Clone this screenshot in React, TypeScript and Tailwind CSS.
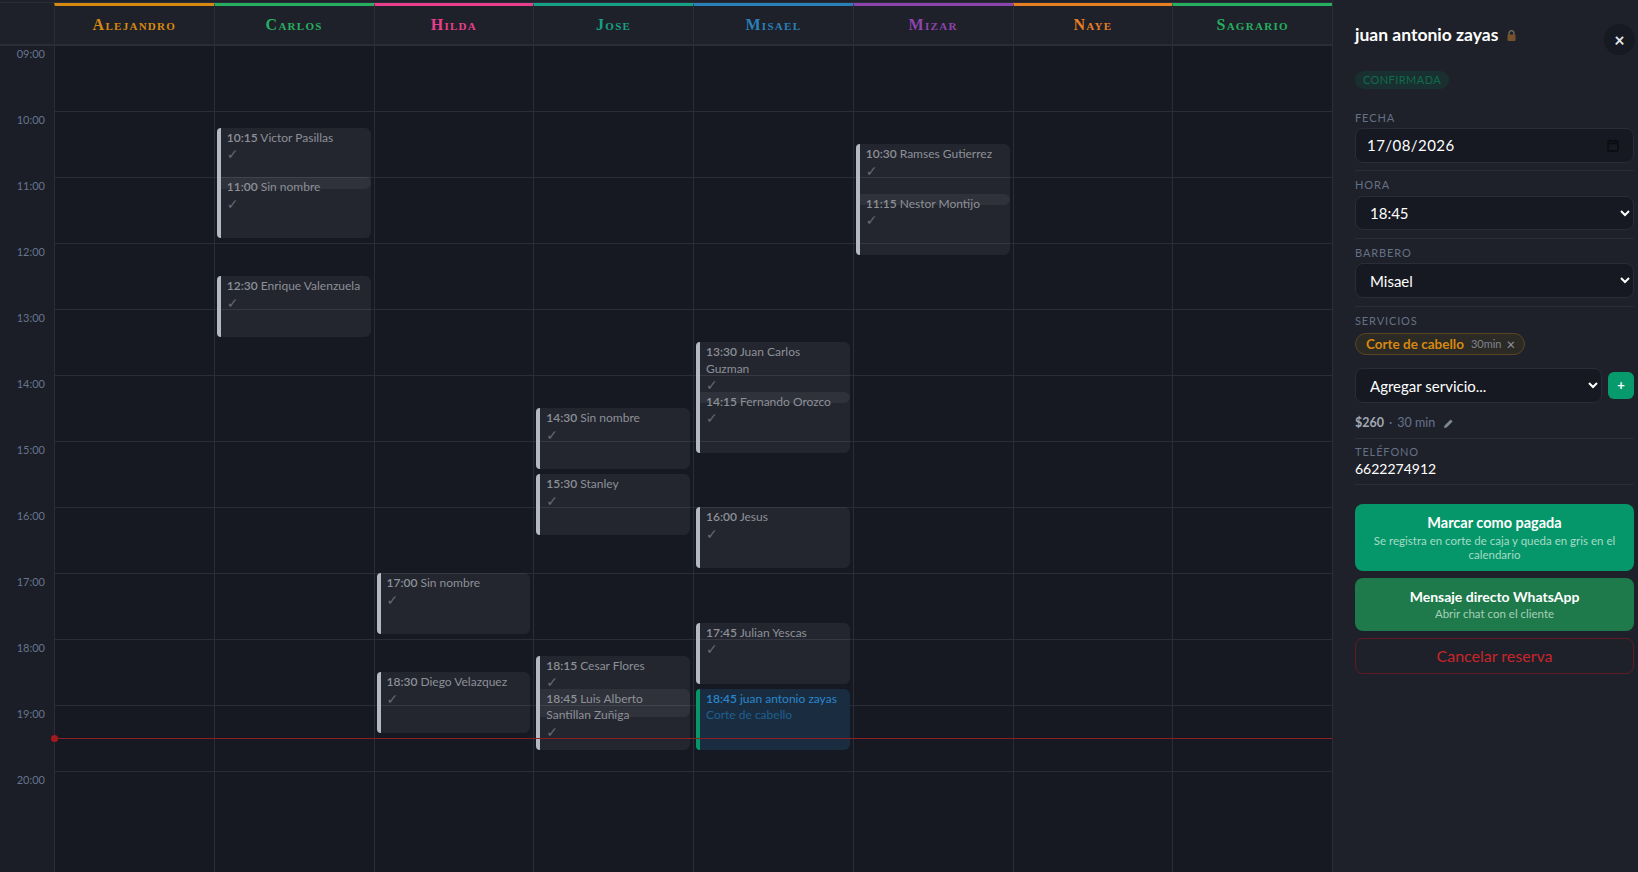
import React from 'react';

const hours = ['09:00', '10:00', '11:00', '12:00', '13:00', '14:00', '15:00', '16:00', '17:00', '18:00', '19:00', '20:00'];

const barbers = [
    { name: 'Alejandro', accent: 'border-t-[#d68910] text-[#d68910]' },
    { name: 'Carlos', accent: 'border-t-[#27ae60] text-[#27ae60]' },
    { name: 'Hilda', accent: 'border-t-[#e83e8c] text-[#e83e8c]' },
    { name: 'Jose', accent: 'border-t-[#16a085] text-[#16a085]' },
    { name: 'Misael', accent: 'border-t-[#2980b9] text-[#2980b9]' },
    { name: 'Mizar', accent: 'border-t-[#8e44ad] text-[#8e44ad]' },
    { name: 'Naye', accent: 'border-t-[#e67e22] text-[#e67e22]' },
    { name: 'Sagrario', accent: 'border-t-[#27ae60] text-[#27ae60]' },
];

type Booking = { time: string; client: string; service?: string; active?: boolean };

const bookings: Record<string, Booking[]> = {
    Carlos: [
        { time: '10:15', client: 'Victor Pasillas' },
        { time: '11:00', client: 'Sin nombre' },
        { time: '12:30', client: 'Enrique Valenzuela' },
    ],
    Hilda: [
        { time: '17:00', client: 'Sin nombre' },
        { time: '18:30', client: 'Diego Velazquez' },
    ],
    Jose: [
        { time: '14:30', client: 'Sin nombre' },
        { time: '15:30', client: 'Stanley' },
        { time: '18:15', client: 'Cesar Flores' },
        { time: '18:45', client: 'Luis Alberto Santillan Zuñiga' },
    ],
    Misael: [
        { time: '13:30', client: 'Juan Carlos Guzman' },
        { time: '14:15', client: 'Fernando Orozco' },
        { time: '16:00', client: 'Jesus' },
        { time: '17:45', client: 'Julian Yescas' },
        { time: '18:45', client: 'juan antonio zayas', service: 'Corte de cabello', active: true },
    ],
    Mizar: [
        { time: '10:30', client: 'Ramses Gutierrez' },
        { time: '11:15', client: 'Nestor Montijo' },
    ],
};

const topFor = (time: string) => {
    const [h, m] = time.split(':').map(Number);
    return (h - 9 + m / 60) * 66 - 1;
};

const BookingCard = ({ booking }: { booking: Booking }) => (
    <div
        className={`absolute left-[2px] right-[3px] h-[61px] rounded-l-[4px] rounded-r-md border-l-4 pl-[6px] pr-[8px] pt-[2px] text-[12px] leading-[16.5px] ${
            booking.active ? 'border-l-[#059669] bg-[#1a2d40] text-[#2a85cc]' : 'border-l-[#b4bac4] bg-white/[0.06] text-[#8d9097]'
        }`}
        style={{ top: topFor(booking.time) }}
    >
        <div>
            <span className="font-semibold">{booking.time}</span> {booking.client}
        </div>
        {booking.active ? (
            <div className="text-[#1f5f90]">{booking.service}</div>
        ) : (
            <div className="font-['DejaVu_Sans'] text-[14px] text-[#666a72]">✓</div>
        )}
    </div>
);

const Label = ({ children }: { children: React.ReactNode }) => (
    <div className="text-[11px] leading-[14px] tracking-[0.08em] text-[#667085]">{children}</div>
);

const Divider = () => <div className="h-px bg-[#2a2d38]" />;

const fieldClass = 'w-full rounded-lg border border-[#2a2d38] bg-[#161922] px-[10px] text-[15px] text-white outline-none';

export default function App() {
    return (
        <div className="flex h-screen overflow-hidden bg-[#1e2129] font-['Lato',sans-serif]">
            <div className="flex w-[1332px] flex-col pt-[2px]">
                <div className="grid h-[44px] grid-cols-[54px_repeat(8,1fr)] border-t border-t-[#2a2d38] border-b-2 border-b-[#2a2d38]">
                    <div />
                    {barbers.map((b) => (
                        <div
                            key={b.name}
                            className={`flex items-center justify-center border-l border-t-[3px] border-l-[#2a2d38] bg-[#1e2129] pb-px font-['Liberation_Serif',serif] text-[16px] font-bold tracking-[0.08em] [font-variant:small-caps] ${b.accent}`}
                        >
                            {b.name}
                        </div>
                    ))}
                </div>
                <div className="relative grid flex-1 grid-cols-[54px_repeat(8,1fr)] bg-[#161922]">
                    <div className="flex flex-col bg-[#1b1e26]">
                        {hours.map((h, i) => (
                            <div
                                key={h}
                                className={`pr-[9px] text-right text-[11px] leading-[14px] text-[#66748f] ${
                                    i === 0 ? 'h-[65px] pt-px' : i === 11 ? 'flex-1 pt-[2px]' : 'h-[66px] pt-[2px]'
                                }`}
                            >
                                {h}
                            </div>
                        ))}
                    </div>
                    {barbers.map((b) => (
                        <div key={b.name} className="relative flex flex-col border-l border-[#2a2d38]">
                            {hours.map((h, i) => (
                                <div
                                    key={h}
                                    className={i === 0 ? 'h-[65px]' : i === 11 ? 'flex-1 border-t border-[#2a2d38]' : 'h-[66px] border-t border-[#2a2d38]'}
                                />
                            ))}
                            {(bookings[b.name] || []).map((booking) => (
                                <BookingCard key={booking.time} booking={booking} />
                            ))}
                        </div>
                    ))}
                    <div className="absolute left-[54px] right-0 top-[692px] h-px bg-[#8b1f24]">
                        <div className="absolute -left-[3px] -top-[3px] size-[7px] rounded-full bg-[#a3191f]" />
                    </div>
                </div>
            </div>

            <aside className="flex w-[306px] flex-col border-l border-[#2a2d38] pl-[22px] pr-1">
                <div className="relative flex h-[71px] items-start">
                    <div className="mt-[24px] flex items-center gap-2 text-[17.5px] font-bold leading-[22px] text-white">
                        juan antonio zayas
                        <svg width="9" height="11" viewBox="0 0 9 11" className="ml-[1px]">
                            <path d="M2 5V3.2a2.5 2.5 0 0 1 5 0V5" fill="none" stroke="#7d7468" strokeWidth="1.2" />
                            <rect x="0.5" y="4.5" width="8" height="6.5" rx="1" fill="#75522c" />
                        </svg>
                    </div>
                    <button className="absolute right-[-1px] top-[24px] flex size-[31px] items-center justify-center rounded-full bg-[#171a22] text-[18px] font-bold leading-none text-[#e5e7eb]">
                        ×
                    </button>
                </div>
                <div className="flex h-[18px] w-[94px] items-center justify-center rounded-full bg-[#1a3030] text-[11px] tracking-[0.04em] text-[#0f6b4d]">
                    CONFIRMADA
                </div>

                <div className="mt-[22px]">
                    <Label>FECHA</Label>
                </div>
                <div className={`${fieldClass} mt-[3px] flex h-[35px] items-center justify-between tracking-[0.03em]`}>
                    <span className="pl-px">17/08/2026</span>
                    <svg width="12" height="13" viewBox="0 0 12 13" className="mr-[4px]" fill="none" stroke="#0b0c10" strokeWidth="1.4">
                        <rect x="1" y="2" width="10" height="10" rx="1" />
                        <path d="M1 4.5h10M3.5 0.5v2M8.5 0.5v2" />
                    </svg>
                </div>
                <div className="mt-[7px]">
                    <Divider />
                </div>

                <div className="mt-[7px]">
                    <Label>HORA</Label>
                </div>
                <select defaultValue="18:45" className={`${fieldClass} mt-[4px] h-[34px]`}>
                    <option>18:45</option>
                </select>
                <div className="mt-[8px]">
                    <Divider />
                </div>

                <div className="mt-[7px]">
                    <Label>BARBERO</Label>
                </div>
                <select defaultValue="Misael" className={`${fieldClass} mt-[3px] h-[35px]`}>
                    <option>Misael</option>
                </select>
                <div className="mt-[8px]">
                    <Divider />
                </div>

                <div className="mt-[7px]">
                    <Label>SERVICIOS</Label>
                </div>
                <div className="mt-[5px] flex h-[22px] w-[170px] items-center rounded-full border border-[#5a4520] bg-[#2c2a24] pl-[10px] text-[13.5px] font-bold text-[#d68910]">
                    Corte de cabello
                    <span className="ml-[7px] text-[11px] font-normal text-[#7c8494]">30min</span>
                    <span className="ml-[5px] text-[15px] font-normal leading-none text-[#8e95a3]">×</span>
                </div>
                <div className="mt-[13px] flex items-center gap-[6px]">
                    <select defaultValue="add" className={`${fieldClass} h-[35px] flex-1`}>
                        <option value="add">Agregar servicio...</option>
                    </select>
                    <button className="flex h-[27px] w-[26px] items-center justify-center rounded-md bg-[#069a6c] text-[13px] font-bold leading-none text-white">
                        +
                    </button>
                </div>
                <div className="mt-[12px] flex h-[16px] items-center text-[12.5px] text-[#66748f]">
                    <span className="font-bold text-[#a3a9b5]">$260</span>
                    <span className="mx-[5px]">·</span>
                    <span>30 min</span>
                    <svg width="11" height="11" viewBox="0 0 11 11" className="ml-[8px]">
                        <path d="M1 10l.6-2.6L7.6 1.4l2 2-6 6z" fill="#7d8796" />
                    </svg>
                </div>
                <div className="mt-[7px]">
                    <Divider />
                </div>

                <div className="mt-[6px]">
                    <Label>TELÉFONO</Label>
                </div>
                <div className="text-[14px] leading-[20px] text-white">6622274912</div>
                <div className="mt-[5px]">
                    <Divider />
                </div>

                <button className="mt-[19px] flex h-[67px] flex-col items-center justify-center rounded-lg bg-[#059669] px-3 text-center">
                    <span className="text-[14.5px] font-bold leading-[18px] text-white">Marcar como pagada</span>
                    <span className="mt-[2px] text-[11.5px] leading-[14px] text-[#a5dcc6]">
                        Se registra en corte de caja y queda en gris en el calendario
                    </span>
                </button>
                <button className="mt-[7px] flex h-[53px] flex-col items-center justify-center rounded-lg bg-[#1e7a4a] px-3 text-center">
                    <span className="text-[14px] font-bold leading-[18px] text-white">Mensaje directo WhatsApp</span>
                    <span className="mt-px text-[11.5px] leading-[14px] text-[#a6d0b9]">Abrir chat con el cliente</span>
                </button>
                <button className="mt-[7px] h-[36px] rounded-lg border border-[#5e1c20] text-[16px] text-[#c9252b]">Cancelar reserva</button>
            </aside>
        </div>
    );
}
